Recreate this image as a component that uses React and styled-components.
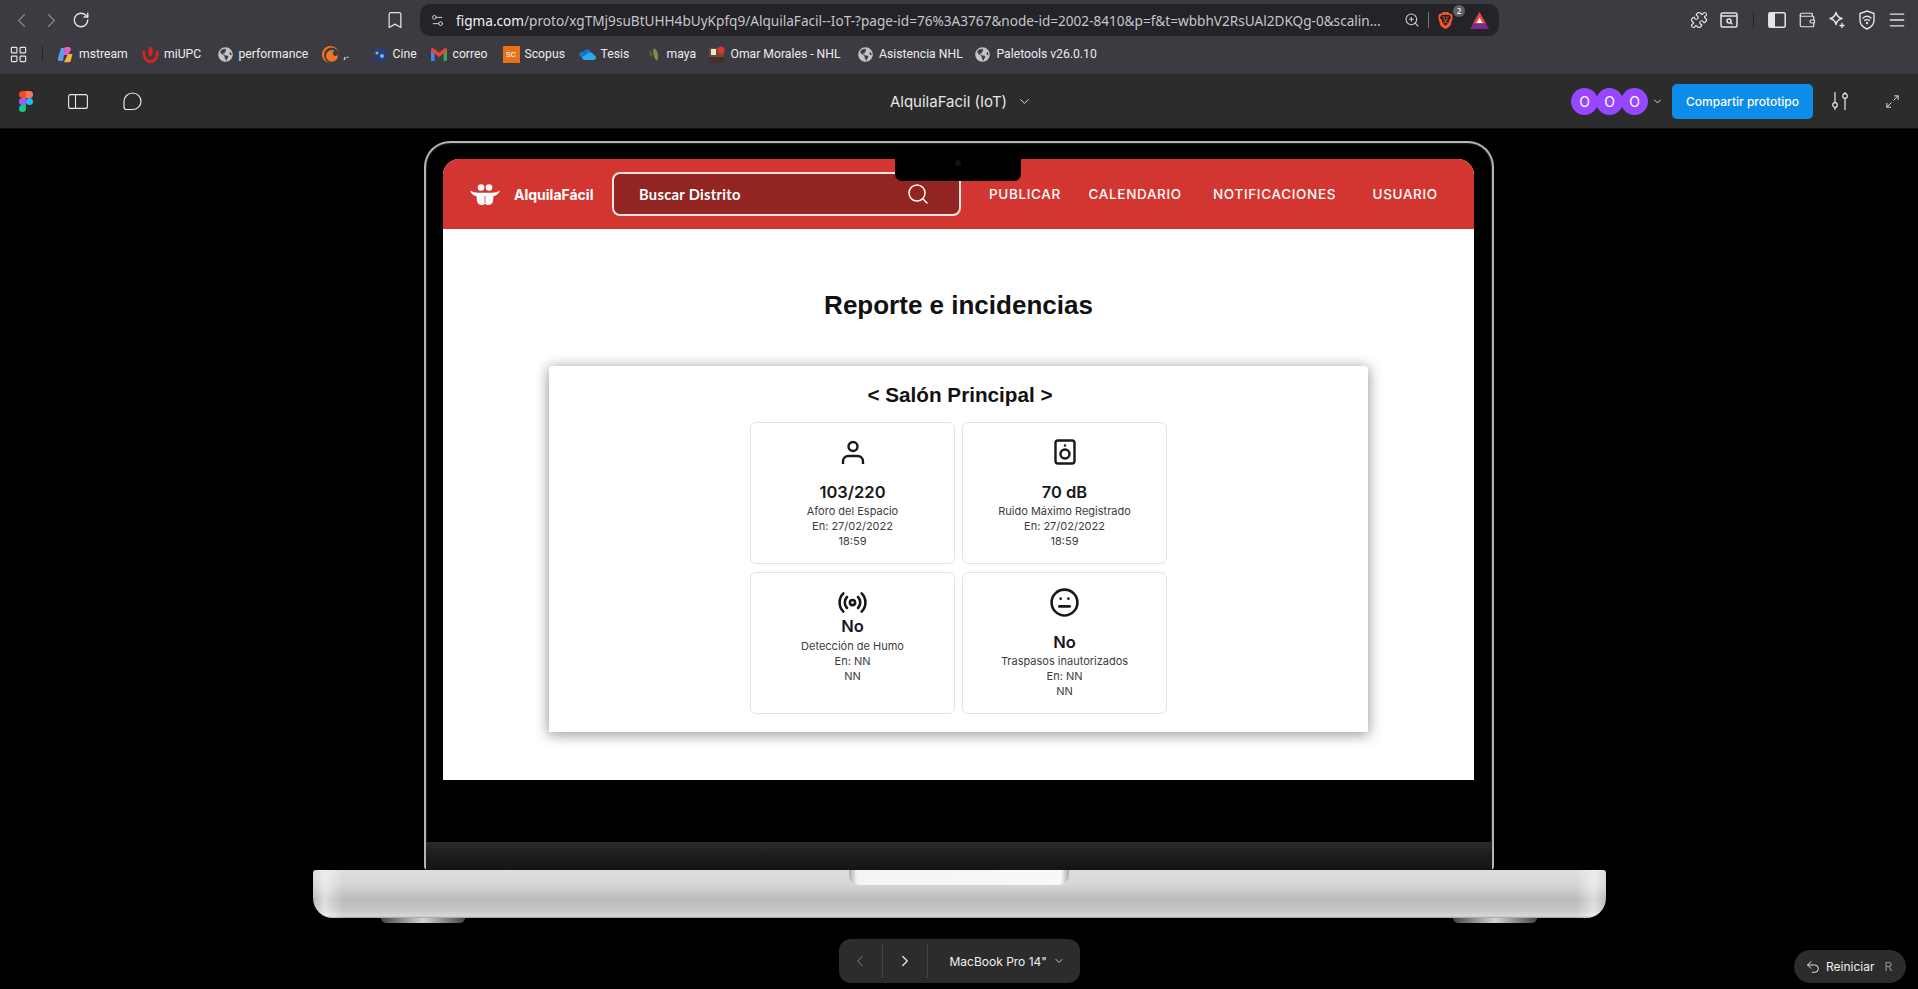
import React from 'react';
import styled, { createGlobalStyle } from 'styled-components';
import {
  ChevronLeft, ChevronRight, ChevronDown, RotateCw, Bookmark, Settings2, ZoomIn, Puzzle,
  Wallet, Menu, LayoutGrid, Maximize2, Undo2, Search, Radio, Meh,
} from 'lucide-react';
import { FaGlobeAmericas } from 'react-icons/fa';
import { SiBrave, SiCrunchyroll } from 'react-icons/si';

const GlobalStyle = createGlobalStyle`
  html, body { margin: 0; padding: 0; background: #000; }
  * { box-sizing: border-box; }
`;

const Page = styled.div`
  width: 100%;
  height: 100vh;
  display: flex;
  flex-direction: column;
  overflow: hidden;
  background: #000;
  font-family: "Inter", "Liberation Sans", sans-serif;
`;

/* browser chrome */
const Toolbar = styled.div`
  height: 37px;
  padding: 4px 6px 1px;
  display: flex;
  align-items: center;
  background: #3b3b41;
`;

const ToolButton = styled.div`
  width: 30px;
  height: 30px;
  flex: none;
  display: flex;
  align-items: center;
  justify-content: center;
  color: ${(p) => (p.$dim ? '#85858a' : '#e4e4e6')};
  margin-left: ${(p) => p.$ml || 0}px;
`;

const UrlBar = styled.div`
  width: 1079px;
  height: 32px;
  margin-left: 10px;
  padding: 0 10px;
  display: flex;
  align-items: center;
  border-radius: 10px;
  background: #232328;
  color: #c6c6ca;
  font-family: "Noto Sans", "Open Sans", sans-serif;
  font-size: 13.6px;
  white-space: nowrap;
`;

const UrlText = styled.span`
  margin-left: 11px;
  width: 930px;
  overflow: hidden;
  b { font-weight: 400; color: #f2f2f3; }
`;

const UrlActions = styled.div`
  margin-left: auto;
  display: flex;
  align-items: center;
  position: relative;
  color: #cfcfd2;
`;

const Separator = styled.div`
  width: 1px;
  height: ${(p) => p.$h || 16}px;
  margin: 0 ${(p) => p.$m || 8}px;
  background: ${(p) => p.$color || '#77777c'};
  flex: none;
`;

const CountBadge = styled.span`
  position: absolute;
  left: 49px;
  top: -7px;
  width: 12px;
  height: 12px;
  border-radius: 50%;
  background: #5f6068;
  color: #eee;
  font-size: 8px;
  line-height: 12px;
  text-align: center;
  font-weight: 600;
`;

const BadgeGap = styled.span`
  width: 16px;
  flex: none;
`;

const RightTools = styled.div`
  margin-left: auto;
  display: flex;
  align-items: center;
`;

const BookmarkBar = styled.div`
  height: 37px;
  padding: 0 0 3px 9px;
  display: flex;
  align-items: center;
  background: #3b3b41;
`;

const BookmarkItem = styled.div`
  width: ${(p) => p.$w}px;
  flex: none;
  display: flex;
  align-items: center;
  gap: 5px;
  color: #ececee;
  font-family: "Roboto", "Open Sans", sans-serif;
  font-size: 12.2px;
  white-space: nowrap;
`;

const BookmarkIcon = styled.span`
  width: 17px;
  height: 17px;
  flex: none;
  display: flex;
  align-items: center;
  justify-content: center;
  color: ${(p) => p.$color || '#c4c4c8'};
`;

const ScopusTile = styled.span`
  width: 17px;
  height: 17px;
  background: #e9711c;
  color: #fff;
  font-size: 8px;
  line-height: 17px;
  text-align: center;
`;

/* figma bar */
const FigmaBar = styled.div`
  height: 55px;
  flex: none;
  display: grid;
  grid-template-columns: 1fr auto 1fr;
  align-items: center;
  background: #2c2c2c;
  border-bottom: 1px solid #111;
  color: #f0f0f0;
`;

const FigmaLeft = styled.div`
  display: flex;
  align-items: center;
  padding-left: 19px;
  gap: 35px;
`;

const FileTitle = styled.div`
  display: flex;
  align-items: center;
  gap: 10px;
  font-size: 15px;
  color: #e6e6e6;
  padding-left: 4px;
`;

const FigmaRight = styled.div`
  display: flex;
  align-items: center;
  justify-content: flex-end;
  padding-right: 11px;
`;

const Avatar = styled.div`
  width: 27px;
  height: 27px;
  margin-left: ${(p) => (p.$first ? 0 : -2)}px;
  border-radius: 50%;
  background: #9747ff;
  color: #fff;
  font-size: 14px;
  line-height: 27px;
  text-align: center;
`;

const AvatarCaret = styled.span`
  margin-left: 4px;
  display: flex;
  align-items: center;
`;

const ShareButton = styled.div`
  width: 141px;
  height: 35px;
  margin-left: 9px;
  border-radius: 5px;
  background: #0d8ce9;
  color: #fff;
  font-size: 12px;
  font-weight: 500;
  line-height: 35px;
  text-align: center;
`;

/* stage with the laptop */
const Stage = styled.div`
  flex: 1;
  display: flex;
  flex-direction: column;
  align-items: center;
  background: #000;
`;

const Lid = styled.div`
  position: relative;
  width: 1070px;
  height: 729px;
  margin-top: 12px;
  flex: none;
  display: flex;
  flex-direction: column;
  border: 2px solid #b4b4b6;
  border-bottom: none;
  border-radius: 26px 26px 4px 4px;
  background: #000;
  box-shadow: inset 0 0 2px #777;
`;

const Screen = styled.div`
  width: 1031px;
  height: 621px;
  margin: 16px 0 0 17px;
  flex: none;
  display: flex;
  flex-direction: column;
  background: #fff;
  border-radius: 16px 16px 0 0;
  overflow: hidden;
`;

const Chin = styled.div`
  height: 28px;
  margin-top: auto;
  flex: none;
  background: linear-gradient(#2b2b2c, #1e1e1f 40%, #141415);
`;

const Notch = styled.div`
  position: absolute;
  left: 469px;
  top: 16px;
  width: 126px;
  height: 22px;
  background: #000;
  border-radius: 0 0 7px 7px;
  &::after {
    content: '';
    position: absolute;
    left: 60px;
    top: 1px;
    width: 6px;
    height: 6px;
    border-radius: 50%;
    background: #0d1420;
  }
`;

const AppHeader = styled.header`
  height: 70px;
  flex: none;
  display: flex;
  align-items: center;
  background: #d33631;
  color: #fff;
`;

const Brand = styled.div`
  width: 169px;
  flex: none;
  padding-left: 27px;
  display: flex;
  align-items: center;
  gap: 14px;
  font-size: 14px;
  font-weight: 700;
  white-space: nowrap;
`;

const SearchBox = styled.div`
  width: 349px;
  height: 44px;
  flex: none;
  padding: 0 29px 0 25px;
  display: flex;
  align-items: center;
  justify-content: space-between;
  border: 2px solid #f4e4e3;
  border-radius: 8px;
  background: #922421;
  font-family: "Lato", "Inter", sans-serif;
  font-size: 14.7px;
  font-weight: 700;
  letter-spacing: .3px;
`;

const Nav = styled.nav`
  margin-left: 28px;
  display: flex;
`;

const NavItem = styled.span`
  width: ${(p) => p.$w}px;
  flex: none;
  font-size: 13.5px;
  font-weight: 500;
  letter-spacing: .65px;
  white-space: nowrap;
`;

const Content = styled.main`
  flex: 1;
  display: flex;
  flex-direction: column;
  align-items: center;
  background: #fff;
`;

const Heading = styled.h1`
  margin: 58px 0 0;
  font-family: "Liberation Sans", sans-serif;
  font-size: 26px;
  line-height: 36px;
  font-weight: 700;
  color: #111;
`;

const Panel = styled.section`
  width: 819px;
  height: 366px;
  margin-top: 43px;
  padding-top: 15px;
  display: flex;
  flex-direction: column;
  align-items: center;
  border-radius: 4px 4px 0 0;
  background: #fff;
  box-shadow: 0 2px 14px 1px rgba(0, 0, 0, .4);
`;

const PanelTitle = styled.h2`
  margin: 0;
  padding-left: 3px;
  font-family: "Liberation Sans", sans-serif;
  font-size: 20.7px;
  line-height: 28px;
  font-weight: 700;
  color: #111;
`;

const CardGrid = styled.div`
  margin-top: 13px;
  display: grid;
  grid-template-columns: 205px 205px;
  grid-template-rows: 142px 142px;
  gap: 8px 7px;
`;

const Card = styled.article`
  padding-top: 13px;
  display: flex;
  flex-direction: column;
  align-items: center;
  border: 1px solid #e4e4e7;
  border-radius: 6px;
  background: #fff;
  color: #18181b;
  text-align: center;
`;

const CardIcon = styled.div`
  height: 32px;
  flex: none;
  display: flex;
  align-items: center;
  justify-content: center;
  color: #18181b;
`;

const CardValue = styled.div`
  margin-top: ${(p) => (p.$tight ? -3 : 13)}px;
  font-size: 16.5px;
  line-height: 22px;
  font-weight: 600;
`;

const CardText = styled.div`
  margin-top: ${(p) => (p.$tight ? 2 : 1)}px;
  font-size: 11px;
  line-height: 15px;
  color: #3c3c42;
`;

const Base = styled.div`
  width: 1293px;
  height: 48px;
  flex: none;
  display: flex;
  justify-content: center;
  border-radius: 3px 3px 20px 20px;
  background:
    linear-gradient(to right, rgba(255,255,255,0) 0, rgba(255,255,255,.5) 12px, rgba(255,255,255,0) 30px, rgba(255,255,255,0) calc(100% - 30px), rgba(255,255,255,.5) calc(100% - 12px), rgba(255,255,255,0) 100%),
    linear-gradient(#dedee0 0, #d6d6d8 30%, #bbbbbe 62%, #c4c4c6 82%, #d8d8da 96%, #a0a0a2 100%);
`;

const Thumb = styled.div`
  width: 220px;
  height: 15px;
  border-radius: 0 0 10px 10px;
  background: linear-gradient(to right, #a9a9ab, #f4f4f4 8px, #f8f8f8 calc(100% - 8px), #a9a9ab);
`;

const Feet = styled.div`
  width: 1156px;
  height: 5px;
  flex: none;
  display: flex;
  justify-content: space-between;
`;

const Foot = styled.div`
  width: 84px;
  height: 5px;
  border-radius: 0 0 8px 8px;
  background: linear-gradient(to right, #444, #d5d5d5 50%, #444);
`;

const Controls = styled.div`
  width: 100%;
  margin-top: 16px;
  padding: 0 12px;
  display: grid;
  grid-template-columns: 1fr auto 1fr;
  align-items: end;
`;

const DevicePill = styled.div`
  grid-column: 2;
  width: 241px;
  height: 44px;
  display: flex;
  align-items: center;
  border-radius: 12px;
  background: #2c2c2c;
  color: #f0f0f0;
  font-size: 12px;
`;

const PillButton = styled.div`
  width: ${(p) => p.$w}px;
  height: 34px;
  flex: none;
  display: flex;
  align-items: center;
  justify-content: center;
  color: ${(p) => (p.$dim ? '#777' : '#eee')};
  border-right: 1px solid #444;
`;

const DeviceName = styled.div`
  margin-left: 22px;
  display: flex;
  align-items: center;
  gap: 6px;
  white-space: nowrap;
`;

const RestartPill = styled.div`
  justify-self: end;
  width: 112px;
  height: 33px;
  display: flex;
  align-items: center;
  padding-left: 11px;
  gap: 5px;
  border-radius: 17px;
  background: #2c2c2c;
  color: #f0f0f0;
  font-size: 12px;
  span { margin-left: 5px; color: #8a8a8a; }
`;

/* drawn icons */
const FigmaLogo = () => (
  <svg width="14" height="21" viewBox="0 0 38 57">
    <path fill="#1abcfe" d="M19 28.5a9.5 9.5 0 1 1 19 0 9.5 9.5 0 0 1-19 0z" />
    <path fill="#0acf83" d="M0 47.5A9.5 9.5 0 0 1 9.5 38H19v9.5a9.5 9.5 0 1 1-19 0z" />
    <path fill="#ff7262" d="M19 0v19h9.5a9.5 9.5 0 1 0 0-19H19z" />
    <path fill="#f24e1e" d="M0 9.5A9.5 9.5 0 0 0 9.5 19H19V0H9.5A9.5 9.5 0 0 0 0 9.5z" />
    <path fill="#a259ff" d="M0 28.5A9.5 9.5 0 0 0 9.5 38H19V19H9.5A9.5 9.5 0 0 0 0 28.5z" />
  </svg>
);

const PanelIcon = () => (
  <svg width="20" height="15" viewBox="0 0 20 15" fill="none" stroke="#e8e8e8" strokeWidth="1.1">
    <rect x=".6" y=".6" width="18.8" height="13.8" rx="2" />
    <path d="M7.5.6v13.8" />
  </svg>
);

const CommentIcon = () => (
  <svg width="19" height="19" viewBox="0 0 19 19" fill="none" stroke="#e8e8e8" strokeWidth="1.2">
    <path d="M9.5 1C14 1 18 4.6 18 9.3c0 4.6-3.800 8.200-8.500 8.200H3.400C2 17.500 1 16.500 1 15V9.500C1 4.700 5 1 9.500 1z" />
  </svg>
);

const SlidersIcon = () => (
  <svg width="18" height="20" viewBox="0 0 18 20" fill="none" stroke="#e8e8e8" strokeWidth="1.200">
    <path d="M4 1v11M4 16v3M14 1v2M14 7v12" />
    <circle cx="4" cy="14" r="2.300" />
    <circle cx="14" cy="5" r="2.300" />
  </svg>
);

const SearchWindowIcon = () => (
  <svg width="18" height="16" viewBox="0 0 18 16" fill="none" stroke="#e4e4e6" strokeWidth="1.500">
    <rect x="1" y="1" width="16" height="14" rx="1.500" />
    <path d="M1 4h16" />
    <circle cx="9" cy="9" r="2" />
    <path d="M10.500 10.500l1.800 1.800" />
  </svg>
);

const SidebarIcon = () => (
  <svg width="18" height="16" viewBox="0 0 18 16">
    <rect x=".8" y=".8" width="16.400" height="14.400" rx="1.500" fill="none" stroke="#e4e4e6" strokeWidth="1.500" />
    <rect x="1" y="1" width="6" height="14" fill="#e4e4e6" />
  </svg>
);

const SparkleIcon = () => (
  <svg width="18" height="18" viewBox="0 0 18 18" fill="none" stroke="#e4e4e6" strokeWidth="1.400" strokeLinejoin="round">
    <path d="M8 1.500c.8 3.600 2.400 5.200 6 6-3.600.8-5.200 2.400-6 6-.8-3.600-2.400-5.200-6-6 3.600-.8 5.200-2.400 6-6z" />
    <path d="M14 12.500v4M12 14.500h4" strokeLinecap="round" />
  </svg>
);

const ShieldWifiIcon = () => (
  <svg width="18" height="20" viewBox="0 0 18 20" fill="none" stroke="#e4e4e6" strokeWidth="1.400" strokeLinecap="round">
    <path d="M9 1l7 2.500v6.500c0 4.500-3.500 7.500-7 9-3.500-1.500-7-4.500-7-9V3.500z" />
    <path d="M5 8c2.400-2 5.600-2 8 0M6.600 10.400c1.500-1 3.300-1 4.800 0" />
    <circle cx="9" cy="13" r=".5" />
  </svg>
);

const BatTriangle = () => (
  <svg width="19" height="17" viewBox="0 0 19 17">
    <path fill="#7a2b8f" d="M9.500 0L19 17H0z" />
    <path fill="#e8453a" d="M9.500 0L16 11.500H3z" />
    <path fill="#fff" d="M9.500 5.500l3 5.500h-6z" />
  </svg>
);

const CopilotIcon = () => (
  <svg width="17" height="17" viewBox="0 0 17 17">
    <path fill="#5a9cf0" d="M4 2h4L6 15H2.500C1 15 .5 13.500 1 12z" />
    <path fill="#e45fc0" d="M8 1h3.500C13 1 14 2 14 3.500L11 9H6.500z" />
    <path fill="#f3b43f" d="M11 8h4.500l-1.600 6.500c-.3 1.200-1.300 1.800-2.400 1.800H7z" />
  </svg>
);

const UpcIcon = () => (
  <svg width="17" height="18" viewBox="0 0 17 18" fill="none" stroke="#e2231a" strokeWidth="2.600">
    <path d="M2 6c-1 6 2 10.500 6.500 10.500S16 12 15 6" />
    <path d="M8.500 1c3 4 3 7 0 11-3-4-3-7 0-11z" fill="#e2231a" stroke="none" />
  </svg>
);

const CineIcon = () => (
  <svg width="15" height="15" viewBox="0 0 15 15">
    <circle cx="7.500" cy="7.500" r="7" fill="#25407e" />
    <circle cx="5" cy="6" r="1.500" fill="#d8a13a" />
    <circle cx="10" cy="9" r="2" fill="#7fb0e8" />
  </svg>
);

const GmailIcon = () => (
  <svg width="16" height="13" viewBox="0 0 16 13">
    <path fill="#4285f4" d="M0 2v10c0 .6.400 1 1 1h2.500V5z" />
    <path fill="#34a853" d="M16 2v10c0 .6-.400 1-1 1h-2.500V5z" />
    <path fill="#ea4335" d="M0 1.500C0 .3 1.300-.400 2.300.300L8 4.500l5.700-4.200C14.700-.400 16 .3 16 1.500V3L12.500 5.600 8 9 3.500 5.600 0 3z" />
  </svg>
);

const CloudIcon = () => (
  <svg width="17" height="12" viewBox="0 0 17 12">
    <path fill="#1a73c8" d="M5 3.500C6 1 9.500.300 11.300 2.500L9 9H3C1 9 0 7.600 0 6.300 0 4.500 2 3 5 3.500z" />
    <path fill="#2fa8ee" d="M6 12h8.500c1.500 0 2.500-1.200 2.500-2.500S16 7 14.500 7c-.500-2.500-3.500-3.500-5.500-2C7 6 6 8 3 9c0 2 1.500 3 3 3z" />
  </svg>
);

const LeafIcon = () => (
  <svg width="13" height="15" viewBox="0 0 13 15">
    <path fill="#7f8f45" d="M7 1c4 3 5 8 3 13C7 11 5 6 7 1z" />
    <path fill="#566a30" d="M3 3c2 2 2.500 4 2 7C3 9 1.500 6 3 3z" />
  </svg>
);

const OmarIcon = () => (
  <svg width="16" height="17" viewBox="0 0 16 17">
    <rect y="2" width="15" height="15" rx="2" fill="#6d4a30" />
    <rect x="2" y="3" width="5" height="6" fill="#e9e4da" />
    <rect y="11" width="15" height="6" fill="#43302a" />
    <circle cx="12" cy="4" r="3.500" fill="#e1352c" />
  </svg>
);

const BrandLogo = () => (
  <svg width="30" height="21" viewBox="0 0 30 21" fill="#fff">
    <circle cx="11" cy="3.500" r="3.300" />
    <circle cx="19" cy="3.500" r="3.300" />
    <path d="M0 6.500c3 1.500 5 2.200 8 2.300h14c3-.100 5-.800 8-2.300-.800 3-3.500 5.300-6.500 5.800L23 17c-.300 2.500-2.500 4-4.500 4-1.500 0-2.800-.500-3.500-1.500-.700 1-2 1.500-3.500 1.500-2 0-4.200-1.500-4.500-4l-.500-4.700C3.500 11.800.800 9.500 0 6.500z" />
    <path d="M14.600 12h.800v7h-.800z" fill="#d33631" />
  </svg>
);

const PersonIcon = () => (
  <svg width="24" height="25" viewBox="0 0 24 25" fill="none" stroke="currentColor" strokeWidth="2.400">
    <circle cx="12" cy="6.500" r="4.500" />
    <path d="M2 24v-2.500c0-3 2.300-5.500 5.500-5.500h9c3.200 0 5.500 2.500 5.500 5.500V24" />
  </svg>
);

const SpeakerIcon = () => (
  <svg width="22" height="26" viewBox="0 0 22 26" fill="none" stroke="currentColor" strokeWidth="2.400">
    <rect x="1.500" y="1.500" width="19" height="23" rx="2.500" />
    <circle cx="11" cy="15" r="4.500" />
    <circle cx="11" cy="6.500" r="1.200" fill="currentColor" stroke="none" />
  </svg>
);

const bookmarks = [
  { label: 'mstream', w: 85, icon: <CopilotIcon /> },
  { label: 'miUPC', w: 74.5, icon: <UpcIcon /> },
  { label: 'performance', w: 105, icon: <FaGlobeAmericas size={15} /> },
  { label: ',.', w: 49, icon: <SiCrunchyroll size={17} color="#f47521" /> },
  { label: 'Cine', w: 60, icon: <CineIcon /> },
  { label: 'correo', w: 72, icon: <GmailIcon /> },
  { label: 'Scopus', w: 76, icon: <ScopusTile>SC</ScopusTile> },
  { label: 'Tesis', w: 66, icon: <CloudIcon /> },
  { label: 'maya', w: 64, icon: <LeafIcon /> },
  { label: 'Omar Morales - NHL', w: 148.6, icon: <OmarIcon /> },
  { label: 'Asistencia NHL', w: 117.4, icon: <FaGlobeAmericas size={15} /> },
  { label: 'Paletools v26.0.10', w: 120, icon: <FaGlobeAmericas size={15} /> },
];

const cards = [
  { icon: <PersonIcon />, value: '103/220', lines: ['Aforo del Espacio', 'En: 27/02/2022', '18:59'] },
  { icon: <SpeakerIcon />, value: '70 dB', lines: ['Ruido Máximo Registrado', 'En: 27/02/2022', '18:59'] },
  { icon: <Radio size={31} strokeWidth={2} />, value: 'No', tight: true, lines: ['Detección de Humo', 'En: NN', 'NN'] },
  { icon: <Meh size={31} strokeWidth={2} />, value: 'No', lines: ['Traspasos inautorizados', 'En: NN', 'NN'] },
];

const App = () => (
  <Page>
    <GlobalStyle />
    <Toolbar>
      <ToolButton $dim><ChevronLeft size={23} strokeWidth={1.3} /></ToolButton>
      <ToolButton $dim><ChevronRight size={23} strokeWidth={1.3} /></ToolButton>
      <ToolButton><RotateCw size={18} strokeWidth={1.8} /></ToolButton>
      <ToolButton $ml={284}><Bookmark size={20} strokeWidth={1.5} /></ToolButton>
      <UrlBar>
        <Settings2 size={15} strokeWidth={1.6} color="#cfcfd2" />
        <UrlText>
          <b>figma.com</b>/proto/xgTMj9suBtUHH4bUyKpfq9/AlquilaFacil--IoT-?page-id=76%3A3767&amp;node-id=2002-8410&amp;p=f&amp;t=wbbhV2RsUAl2DKQg-0&amp;scalin...
        </UrlText>
        <UrlActions>
          <ZoomIn size={16} strokeWidth={1.6} />
          <Separator />
          <SiBrave size={17} color="#fb542b" />
          <CountBadge>2</CountBadge>
          <BadgeGap />
          <BatTriangle />
        </UrlActions>
      </UrlBar>
      <RightTools>
        <ToolButton><Puzzle size={18} strokeWidth={1.6} /></ToolButton>
        <ToolButton><SearchWindowIcon /></ToolButton>
        <Separator $m={8.5} $color="#232328" />
        <ToolButton><SidebarIcon /></ToolButton>
        <ToolButton><Wallet size={18} strokeWidth={1.6} /></ToolButton>
        <ToolButton><SparkleIcon /></ToolButton>
        <ToolButton><ShieldWifiIcon /></ToolButton>
        <ToolButton><Menu size={20} strokeWidth={1.6} /></ToolButton>
      </RightTools>
    </Toolbar>

    <BookmarkBar>
      <LayoutGrid size={19} strokeWidth={1.5} color="#e4e4e6" />
      <Separator $m={14} $color="#232328" />
      {bookmarks.map((b) => (
        <BookmarkItem key={b.label} $w={b.w}>
          <BookmarkIcon>{b.icon}</BookmarkIcon>
          {b.label}
        </BookmarkItem>
      ))}
    </BookmarkBar>

    <FigmaBar>
      <FigmaLeft>
        <FigmaLogo />
        <PanelIcon />
        <CommentIcon />
      </FigmaLeft>
      <FileTitle>
        AlquilaFacil (IoT)
        <ChevronDown size={15} strokeWidth={1.5} />
      </FileTitle>
      <FigmaRight>
        <Avatar $first>O</Avatar>
        <Avatar>O</Avatar>
        <Avatar>O</Avatar>
        <AvatarCaret><ChevronDown size={11} strokeWidth={2} /></AvatarCaret>
        <ShareButton>Compartir prototipo</ShareButton>
        <ToolButton $ml={12}><SlidersIcon /></ToolButton>
        <ToolButton $ml={22}><Maximize2 size={15} strokeWidth={1.5} /></ToolButton>
      </FigmaRight>
    </FigmaBar>

    <Stage>
      <Lid>
        <Screen>
          <AppHeader>
            <Brand>
              <BrandLogo />
              AlquilaFácil
            </Brand>
            <SearchBox>
              Buscar Distrito
              <Search size={24} strokeWidth={1.5} />
            </SearchBox>
            <Nav>
              <NavItem $w={99.6}>PUBLICAR</NavItem>
              <NavItem $w={124.4}>CALENDARIO</NavItem>
              <NavItem $w={159.5}>NOTIFICACIONES</NavItem>
              <NavItem $w={64}>USUARIO</NavItem>
            </Nav>
          </AppHeader>
          <Content>
            <Heading>Reporte e incidencias</Heading>
            <Panel>
              <PanelTitle>&lt; Salón Principal &gt;</PanelTitle>
              <CardGrid>
                {cards.map((c) => (
                  <Card key={c.lines[0]}>
                    <CardIcon>{c.icon}</CardIcon>
                    <CardValue $tight={c.tight}>{c.value}</CardValue>
                    <CardText $tight={c.tight}>
                      {c.lines.map((l) => <div key={l}>{l}</div>)}
                    </CardText>
                  </Card>
                ))}
              </CardGrid>
            </Panel>
          </Content>
        </Screen>
        <Chin />
        <Notch />
      </Lid>
      <Base><Thumb /></Base>
      <Feet><Foot /><Foot /></Feet>
      <Controls>
        <DevicePill>
          <PillButton $w={44} $dim><ChevronLeft size={18} strokeWidth={1.4} /></PillButton>
          <PillButton $w={45}><ChevronRight size={18} strokeWidth={1.6} /></PillButton>
          <DeviceName>
            MacBook Pro 14"
            <ChevronDown size={12} strokeWidth={1.6} />
          </DeviceName>
        </DevicePill>
        <RestartPill>
          <Undo2 size={16} strokeWidth={1.4} />
          Reiniciar
          <span>R</span>
        </RestartPill>
      </Controls>
    </Stage>
  </Page>
);

export default App;
